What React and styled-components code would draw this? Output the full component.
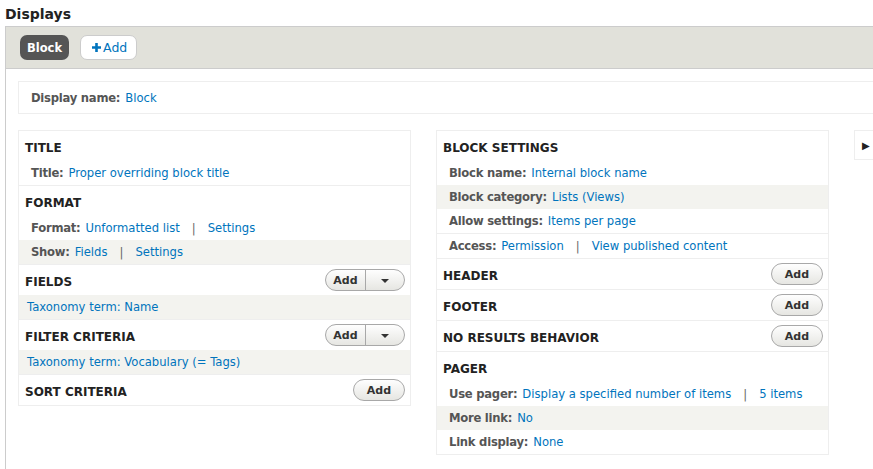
import React from 'react';
import styled, { createGlobalStyle } from 'styled-components';

const GlobalStyle = createGlobalStyle`
  body {
    margin: 0;
    background: #fff;
    font-family: "DejaVu Sans", Verdana, sans-serif;
    color: #333;
    overflow: hidden;
  }
`;

const Page = styled.div`
  width: 1000px;
  padding-left: 5px;
`;

const Heading = styled.h2`
  margin: 0;
  height: 26px;
  padding-top: 6px;
  box-sizing: border-box;
  font-size: 14px;
  font-weight: bold;
  color: #222;
`;

const Panel = styled.div`
  border-left: 1px solid #ccc;
  min-height: 460px;
`;

const TabBar = styled.div`
  display: flex;
  align-items: center;
  gap: 11px;
  height: 41px;
  padding: 0 14px;
  background: #e1e1da;
  border-top: 1px solid #ccc;
  border-bottom: 1px solid #ccc;
  box-sizing: content-box;
`;

const Tab = styled.span`
  display: inline-flex;
  align-items: center;
  justify-content: center;
  height: 25px;
  padding: 0 7px;
  border-radius: 7px;
  font-size: 11.5px;
  font-weight: bold;
  box-sizing: border-box;
  ${({ active }) =>
    active
      ? `background: #555; color: #fff;`
      : `background: #fff; color: #0074bd; border: 1px solid #ccc; font-weight: normal; padding: 0 9px 0 11px; font-size: 12.5px;`}
`;

const PlusIcon = styled.svg`
  width: 9px;
  height: 9px;
  margin-right: 2px;
  fill: #0074bd;
`;

const Body = styled.div`
  padding: 12px 0 0 12px;
`;

const NameBox = styled.div`
  display: flex;
  align-items: center;
  height: 33px;
  padding: 0 12px;
  border: 1px solid #eee;
  border-right: none;
  box-sizing: border-box;
  font-size: 11.6px;
`;

const Columns = styled.div`
  display: grid;
  grid-template-columns: 393px 393px 393px;
  gap: 25px;
  align-items: start;
  margin-top: 16px;
`;

const Column = styled.div`
  border: 1px solid #eee;
`;

const Section = styled.div`
  border-bottom: ${({ last }) => (last ? 'none' : '1px solid #eee')};
`;

const SectionHead = styled.div`
  display: flex;
  align-items: center;
  justify-content: space-between;
  height: 30px;
  padding: 0 5px 0 6px;
  h3 {
    margin: 0;
    padding-top: 3px;
    font-size: 12px;
    font-weight: bold;
    text-transform: uppercase;
    color: #222;
  }
`;

const Row = styled.div`
  display: flex;
  align-items: center;
  height: 24px;
  padding-left: ${({ plain }) => (plain ? '8px' : '12px')};
  background: ${({ shaded }) => (shaded ? '#f3f3ef' : 'transparent')};
  border-bottom: ${({ divider }) => (divider ? '1px solid #eee' : 'none')};
  font-size: 11.6px;
  white-space: nowrap;
`;

const Label = styled.span`
  font-weight: bold;
  color: #555;
  letter-spacing: -0.25px;
  margin-right: 5px;
`;

const Link = styled.a`
  color: #0074bd;
  text-decoration: none;
`;

const Sep = styled.span`
  color: #666;
  margin: 0 12px;
`;

const ButtonGroup = styled.div`
  display: flex;
  height: 22px;
  border: 1px solid #a8a8a8;
  border-radius: 11px;
  background: linear-gradient(#fefefe, #e6e6e2);
  box-sizing: border-box;
  overflow: hidden;
`;

const ButtonPart = styled.span`
  display: flex;
  align-items: center;
  justify-content: center;
  width: ${({ w }) => w}px;
  font-size: 11px;
  font-weight: bold;
  color: #333;
  & + & {
    border-left: 1px solid #a8a8a8;
  }
`;

const Caret = styled.span`
  width: 0;
  height: 0;
  border-left: 4px solid transparent;
  border-right: 4px solid transparent;
  border-top: 4px solid #333;
  margin-top: 1px;
`;

const SideToggle = styled.div`
  display: flex;
  align-items: center;
  height: 30px;
  padding-left: 7px;
  border: 1px solid #eee;
  border-right: none;
  box-sizing: border-box;
  font-size: 10px;
  color: #222;
`;

const AddButton = ({ dropdown }) => (
  <ButtonGroup>
    <ButtonPart w={dropdown ? 39 : 50}>Add</ButtonPart>
    {dropdown && (
      <ButtonPart w={38}>
        <Caret />
      </ButtonPart>
    )}
  </ButtonGroup>
);

const Setting = ({ label, links, shaded, divider }) => (
  <Row shaded={shaded} divider={divider}>
    <Label>{label}:</Label>
    {links.map((l, i) => (
      <React.Fragment key={l}>
        {i > 0 && <Sep>|</Sep>}
        <Link href="#">{l}</Link>
      </React.Fragment>
    ))}
  </Row>
);

const App = () => (
  <>
    <GlobalStyle />
    <Page>
      <Heading>Displays</Heading>
      <Panel>
        <TabBar>
          <Tab active>Block</Tab>
          <Tab>
            <PlusIcon viewBox="0 0 9 9">
              <path d="M3.2 0h2.6v3.2H9v2.6H5.8V9H3.2V5.8H0V3.2h3.2z" />
            </PlusIcon>
            Add
          </Tab>
        </TabBar>
        <Body>
          <NameBox>
            <Label>Display name:</Label>
            <Link href="#">Block</Link>
          </NameBox>
          <Columns>
            <Column>
              <Section>
                <SectionHead>
                  <h3>Title</h3>
                </SectionHead>
                <Setting label="Title" links={['Proper overriding block title']} />
              </Section>
              <Section>
                <SectionHead>
                  <h3>Format</h3>
                </SectionHead>
                <Setting label="Format" links={['Unformatted list', 'Settings']} />
                <Setting label="Show" links={['Fields', 'Settings']} shaded />
              </Section>
              <Section>
                <SectionHead>
                  <h3>Fields</h3>
                  <AddButton dropdown />
                </SectionHead>
                <Row plain shaded>
                  <Link href="#">Taxonomy term: Name</Link>
                </Row>
              </Section>
              <Section>
                <SectionHead>
                  <h3>Filter criteria</h3>
                  <AddButton dropdown />
                </SectionHead>
                <Row plain shaded>
                  <Link href="#">Taxonomy term: Vocabulary (= Tags)</Link>
                </Row>
              </Section>
              <Section last>
                <SectionHead>
                  <h3>Sort criteria</h3>
                  <AddButton />
                </SectionHead>
              </Section>
            </Column>

            <Column>
              <Section>
                <SectionHead>
                  <h3>Block settings</h3>
                </SectionHead>
                <Setting label="Block name" links={['Internal block name']} />
                <Setting label="Block category" links={['Lists (Views)']} shaded />
                <Setting label="Allow settings" links={['Items per page']} divider />
                <Setting label="Access" links={['Permission', 'View published content']} />
              </Section>
              <Section>
                <SectionHead>
                  <h3>Header</h3>
                  <AddButton />
                </SectionHead>
              </Section>
              <Section>
                <SectionHead>
                  <h3>Footer</h3>
                  <AddButton />
                </SectionHead>
              </Section>
              <Section>
                <SectionHead>
                  <h3>No results behavior</h3>
                  <AddButton />
                </SectionHead>
              </Section>
              <Section last>
                <SectionHead>
                  <h3>Pager</h3>
                </SectionHead>
                <Setting
                  label="Use pager"
                  links={['Display a specified number of items', '5 items']}
                />
                <Setting label="More link" links={['No']} shaded />
                <Setting label="Link display" links={['None']} />
              </Section>
            </Column>

            <SideToggle>▶</SideToggle>
          </Columns>
        </Body>
      </Panel>
    </Page>
  </>
);

export default App;
